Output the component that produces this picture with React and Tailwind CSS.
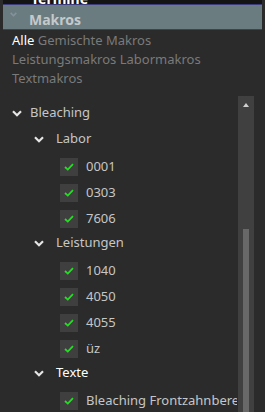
import React from 'react';

const Chevron = ({ className = '', w = 10, h = 7 }) => (
  <svg width={w} height={h} viewBox="0 0 10 7" className={className}>
    <path d="M1 1.2 L5 5.2 L9 1.2" fill="none" stroke="currentColor" strokeWidth="2.2" />
  </svg>
);

const Check = () => (
  <span className="w-[18px] h-[18px] bg-[#3f3f3f] flex items-center justify-center shrink-0">
    <svg width="10" height="8" viewBox="0 0 10 8">
      <path d="M1 4 L3.8 6.6 L9 1.2" fill="none" stroke="#1ee21e" strokeWidth="1.8" />
    </svg>
  </span>
);

const Group = ({ label, indent, white }) => (
  <div className={`h-[26px] flex items-center ${indent}`}>
    <Chevron className="text-[#e6e6e6]" />
    <span className={`ml-[8px] ${white ? 'text-white' : 'text-[#c6c6c6]'}`}>{label}</span>
  </div>
);

const Item = ({ label }) => (
  <div className="h-[26px] flex items-center pl-[60px] pt-[3px] whitespace-nowrap">
    <Check />
    <span className="ml-[8px] text-[#c6c6c6]">{label}</span>
  </div>
);

export default function App() {
  return (
    <div
      className="w-[265px] h-[412px] bg-[#2b2b2b] overflow-hidden text-[13px] relative"
      style={{ fontFamily: '"Noto Sans", "Open Sans", sans-serif' }}
    >
      <div className="mx-[3px] h-[5px] bg-[#141414] border-b border-[#3c3c7c] overflow-hidden relative">
        <span className="absolute left-[28px] top-[-12px] text-white font-bold text-[14px]">Termine</span>
      </div>
      <div className="mx-[3px] h-[25px] bg-[#6b7c80] border-b border-[#3c3c7c] flex items-center relative">
        <Chevron className="absolute left-[7px] top-[7px] text-[#84939a]" w={7} h={5} />
        <span className="ml-[26px] mt-[5px] font-bold text-[14px] text-[#c4c9cb]">Makros</span>
      </div>

      <div className="pl-[12px] pt-[1px] leading-[19px] text-[#7a7a7a]">
        <div>
          <span className="text-white">Alle</span> Gemischte Makros
        </div>
        <div>Leistungsmakros Labormakros</div>
        <div>Textmakros</div>
      </div>

      <div className="flex mt-[8px]">
        <div className="flex-1 min-w-0 overflow-hidden pt-[4px]">
          <Group label="Bleaching" indent="pl-[12px]" />
          <Group label="Labor" indent="pl-[34px] [&>span]:ml-[12px]" />
          <Item label="0001" />
          <Item label="0303" />
          <Item label="7606" />
          <Group label="Leistungen" indent="pl-[34px] [&>span]:ml-[12px]" />
          <Item label="1040" />
          <Item label="4050" />
          <Item label="4055" />
          <Item label="üz" />
          <Group label="Texte" indent="pl-[34px] [&>span]:ml-[12px]" white />
          <Item label="Bleaching Frontzahnbereich" />
        </div>
        <div className="w-[16px] h-[320px] bg-[#404040] mr-[11px] ml-[1px] flex flex-col items-center">
          <div className="mt-[7px] w-0 h-0 border-l-[3.5px] border-r-[3.5px] border-b-[4px] border-l-transparent border-r-transparent border-b-[#cfcfcf]" />
          <div className="mt-[122px] w-[6px] flex-1 bg-[#686868]" />
        </div>
      </div>
    </div>
  );
}
